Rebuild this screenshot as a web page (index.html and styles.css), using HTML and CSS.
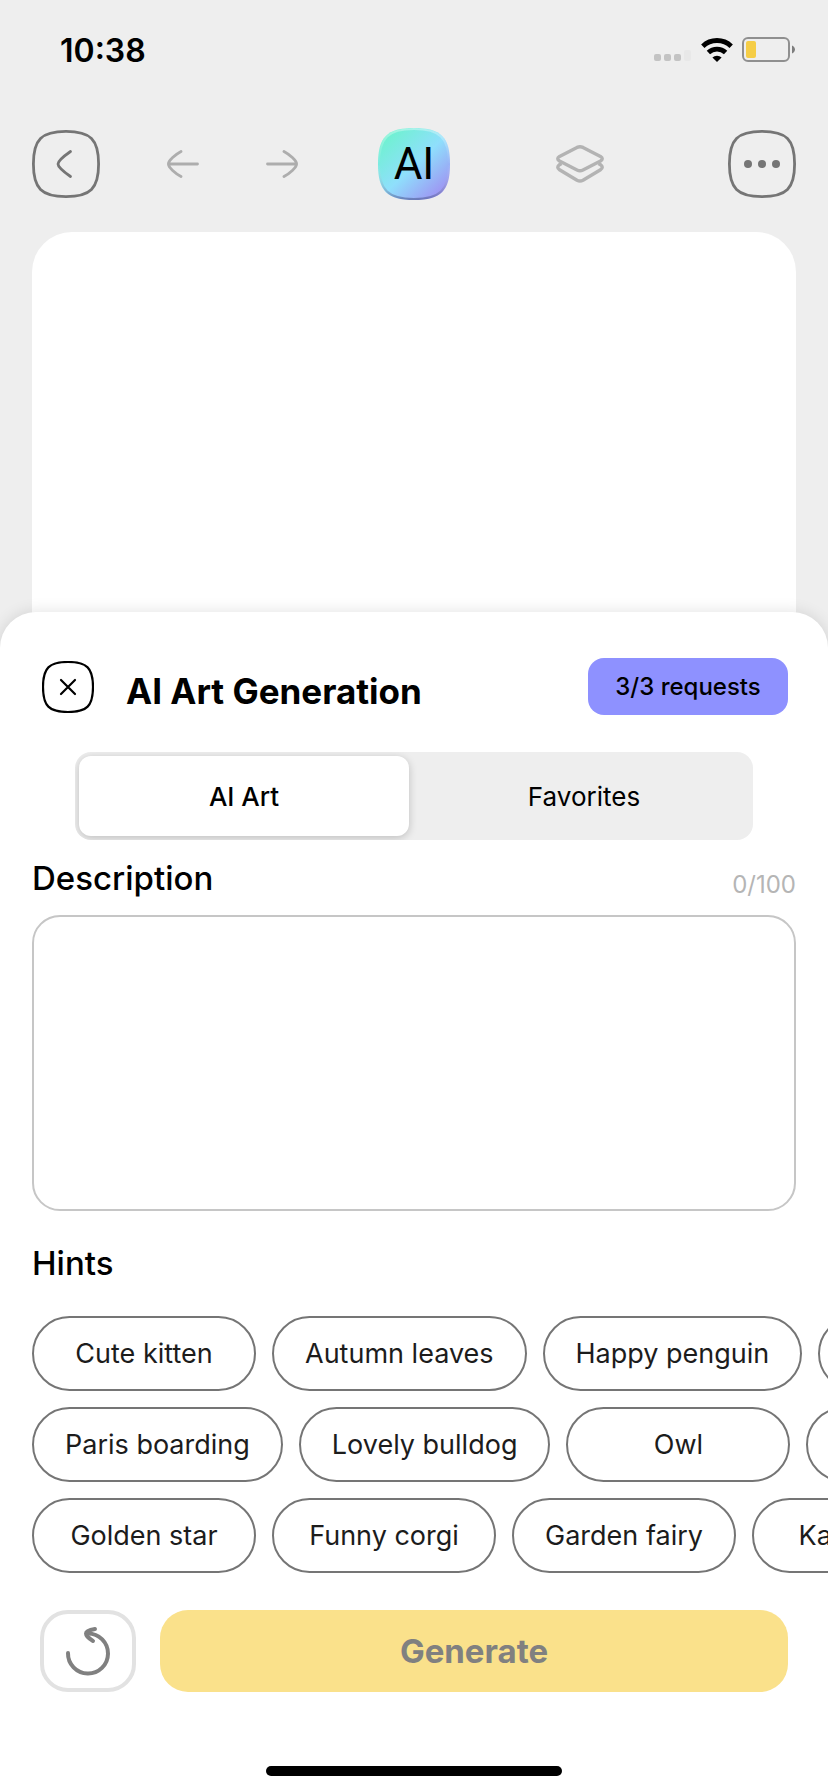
FILE: index.html
```html
<!DOCTYPE html>
<html lang="en">
<head>
    <meta charset="UTF-8">
    <meta name="viewport" content="width=device-width, initial-scale=1.0">
    <title>AI Art Generation</title>
    <link rel="stylesheet" href="styles.css">
</head>
<body>
    <div class="screen">
        <div class="status-bar">
            <span class="time">10:38</span>
            <div class="status-icons">
                <svg width="38" height="24" viewBox="0 0 38 24">
                    <g fill="#c3c3c3">
                        <rect x="0" y="16" width="7" height="7" rx="2"/>
                        <rect x="10" y="16" width="7" height="7" rx="2"/>
                        <rect x="20" y="16" width="7" height="7" rx="2"/>
                    </g>
                    <rect x="30" y="12" width="7" height="11" rx="2" fill="#e8e8e8"/>
                </svg>
                <svg width="32" height="24" viewBox="0 0 32 24">
                    <g fill="none" stroke="#000" stroke-width="4.8">
                        <path d="M1.8 8.2a20.5 20.5 0 0 1 28.4 0"/>
                        <path d="M7.4 14.6a12.5 12.5 0 0 1 17.2 0"/>
                    </g>
                    <path d="M11.4 19.600a6.600 6.600 0 0 1 9.200 0L16 24z"/>
                </svg>
                <svg width="54" height="26" viewBox="0 0 54 26">
                    <rect x="1" y="1" width="46" height="23" rx="5" fill="none" stroke="#8f8f8f" stroke-width="2"/>
                    <rect x="4" y="4" width="10" height="17" rx="2" fill="#f5cd46"/>
                    <path d="M50 8.500c4 2 4 6 0 8z" fill="#7d7d7d"/>
                </svg>
            </div>
        </div>

        <nav class="toolbar">
            <div class="tools-left">
                <button class="icon-btn" aria-label="Back">
                    <svg width="68" height="68" viewBox="0 0 68 68" fill="none" stroke="#757575" stroke-width="2.8" stroke-linecap="round">
                        <path d="M34 1.4C58.5 1.4 66.6 9.5 66.6 34S58.5 66.6 34 66.6 1.4 58.5 1.4 34 9.5 1.4 34 1.4z"/>
                        <path d="M38.500 21.500c-5 3.500-12.500 9-12.500 12.500s7.500 9 12.500 12.500"/>
                    </svg>
                </button>
                <button class="icon-btn" aria-label="Undo">
                    <svg width="32" height="28" viewBox="0 0 32 28" fill="none" stroke="#adadad" stroke-width="2.8" stroke-linecap="round">
                        <path d="M14 1.500C8.500 4.500 1.400 10.500 1.400 14S8.500 23.500 14 26.500M2 14h28.500"/>
                    </svg>
                </button>
                <button class="icon-btn" aria-label="Redo">
                    <svg width="32" height="28" viewBox="0 0 32 28" fill="none" stroke="#adadad" stroke-width="2.8" stroke-linecap="round">
                        <path d="M18 1.500C23.500 4.500 30.600 10.500 30.600 14S23.500 23.500 18 26.500M30 14H1.500"/>
                    </svg>
                </button>
            </div>
            <button class="ai-btn">
                <svg class="ai-bg" width="72" height="72" viewBox="0 0 72 72" aria-hidden="true">
                    <defs>
                        <linearGradient id="aiFill" x1="0.1" y1="0.1" x2="0.9" y2="0.95">
                            <stop offset="0" stop-color="#6ef2cf"/>
                            <stop offset="0.5" stop-color="#8fdffc"/>
                            <stop offset="1" stop-color="#9f8df2"/>
                        </linearGradient>
                        <linearGradient id="aiEdge" x1="0" y1="0" x2="0" y2="1">
                            <stop offset="0" stop-color="#fff" stop-opacity="0.35"/>
                            <stop offset="0.5" stop-color="#fff" stop-opacity="0"/>
                            <stop offset="1" stop-color="#3c4a80" stop-opacity="0.5"/>
                        </linearGradient>
                    </defs>
                    <path d="M36 0C63 0 72 9 72 36S63 72 36 72 0 63 0 36 9 0 36 0z" fill="url(#aiFill)"/>
                    <path d="M36 1C62 1 71 10 71 36S62 71 36 71 1 62 1 36 10 1 36 1z" fill="none" stroke="url(#aiEdge)" stroke-width="2"/>
                </svg>
                <span class="ai-label">AI</span>
            </button>
            <div class="tools-right">
                <button class="icon-btn" aria-label="Layers">
                    <svg width="48" height="38" viewBox="0 0 48 38" fill="none" stroke="#b3b3b3" stroke-width="3.4" stroke-linejoin="round">
                        <path d="M21 2.400q3-1.200 6 0l17.500 9q3.500 2.300 0 4.600L27 25q-3 1.500-6 0L3.500 16q-3.500-2.300 0-4.600z"/>
                        <path d="M5.500 18.500l-2 1.200q-3.500 2.800 0 5L21 35.200q3 1.500 6 0l17.500-10.500q3.500-2.200 0-5l-2-1.200"/>
                    </svg>
                </button>
                <button class="icon-btn" aria-label="More">
                    <svg width="68" height="68" viewBox="0 0 68 68">
                        <path d="M34 1.400C58.500 1.400 66.600 9.500 66.600 34S58.500 66.600 34 66.600 1.400 58.500 1.400 34 9.500 1.400 34 1.400z" fill="none" stroke="#757575" stroke-width="2.8"/>
                        <g fill="#757575">
                            <circle cx="20" cy="34" r="4"/>
                            <circle cx="34" cy="34" r="4"/>
                            <circle cx="48" cy="34" r="4"/>
                        </g>
                    </svg>
                </button>
            </div>
        </nav>

        <div class="canvas"></div>

        <main class="sheet">
            <header class="sheet-header">
                <button class="icon-btn" aria-label="Close">
                    <svg width="52" height="52" viewBox="0 0 52 52" fill="none" stroke="#000" stroke-width="2.2" stroke-linecap="round">
                        <path d="M26 1C45 1 51 7 51 26S45 51 26 51 1 45 1 26 7 1 26 1z"/>
                        <path d="M19 19l14 14M33 19L19 33"/>
                    </svg>
                </button>
                <h1>AI Art Generation</h1>
                <span class="badge">3/3 requests</span>
            </header>

            <div class="tabs">
                <button class="tab active">AI Art</button>
                <button class="tab">Favorites</button>
            </div>

            <div class="field-head">
                <label class="label" for="description">Description</label>
                <span class="counter">0/100</span>
            </div>
            <textarea id="description" class="description" maxlength="100"></textarea>

            <h2 class="label hints-title">Hints</h2>
            <div class="hints">
                <div class="hint-row">
                    <button class="chip">Cute kitten</button>
                    <button class="chip">Autumn leaves</button>
                    <button class="chip">Happy penguin</button>
                    <button class="chip" aria-label="More hints"></button>
                </div>
                <div class="hint-row">
                    <button class="chip">Paris boarding</button>
                    <button class="chip">Lovely bulldog</button>
                    <button class="chip">Owl</button>
                    <button class="chip" aria-label="More hints"></button>
                </div>
                <div class="hint-row">
                    <button class="chip">Golden star</button>
                    <button class="chip">Funny corgi</button>
                    <button class="chip">Garden fairy</button>
                    <button class="chip">Kawaii cat</button>
                </div>
            </div>

            <div class="actions">
                <button class="reset" aria-label="Reset">
                    <svg width="46" height="52" viewBox="0 0 46 52" fill="none" stroke="#808080" stroke-width="4" stroke-linecap="round" stroke-linejoin="round">
                        <path d="M3 28a20 20 0 1 0 20-19.500"/>
                        <path d="M30 4c-5 .8-9 2.500-9 4.500s3.500 5.500 7 7.500"/>
                    </svg>
                </button>
                <button class="generate">Generate</button>
            </div>
            <div class="home-indicator"></div>
        </main>
    </div>
</body>
</html>
```
FILE: styles.css
```css
* { box-sizing: border-box; }
body { margin: 0; background: #eee; color: #000; font-family: Inter, "Liberation Sans", sans-serif; }
button { font-family: inherit; color: inherit; background: none; border: none; padding: 0; cursor: pointer; }
svg { display: block; }

.screen { min-height: 100vh; display: flex; flex-direction: column; overflow: hidden; }

.status-bar { display: flex; justify-content: space-between; align-items: center; height: 100px; padding: 0 32px 0 60px; }
.time { font-size: 32px; font-weight: 600; }
.status-icons { display: flex; align-items: center; gap: 9px; }

.toolbar { display: grid; grid-template-columns: 1fr auto 1fr; align-items: center; height: 72px; margin-top: 28px; padding: 0 32px; }
.tools-left { display: flex; align-items: center; gap: 67px; }
.tools-right { display: flex; align-items: center; justify-content: flex-end; gap: 124px; }
.ai-btn { display: grid; place-items: center; }
.ai-bg, .ai-label { grid-area: 1 / 1; }
.ai-label { font-family: Roboto, sans-serif; font-size: 44px; line-height: 48px; font-weight: 400; }

.canvas { flex: 1; min-height: 200px; margin: 32px 32px -40px; background: #fff; border-radius: 40px 40px 0 0; }

.sheet { position: relative; background: #fff; border-radius: 36px 36px 0 0; box-shadow: 0 0 16px rgba(0, 0, 0, 0.12); padding: 46px 32px 16px; }
.sheet-header { display: flex; align-items: center; padding: 0 8px 0 10px; }
h1 { flex: 1; margin: 0 0 0 32px; padding-top: 8px; font-size: 35px; line-height: 40px; font-weight: 700; }
.badge { width: 200px; background: #8e91ff; border-radius: 16px; font-size: 24px; line-height: 57px; font-weight: 500; text-align: center; }

.tabs { display: flex; gap: 10px; margin: 37px 43px 0; padding: 4px; height: 88px; background: #eee; border-radius: 16px; overflow: hidden; }
.tab { flex: 1; border-radius: 12px; font-size: 26px; font-weight: 400; }
.tab.active { background: #fff; box-shadow: 0 2px 8px rgba(0, 0, 0, 0.2); font-weight: 500; }

.field-head { display: flex; justify-content: space-between; align-items: flex-end; margin: 18px 0 17px; }
.label { font-size: 33px; line-height: 40px; font-weight: 500; }
.counter { font-size: 24px; line-height: 26px; color: #b5b5b5; }
.description { display: block; width: 100%; height: 296px; padding: 20px; border: 2px solid #c6c6c6; border-radius: 28px; outline: none; resize: none; font: inherit; font-size: 28px; }

.hints-title { margin: 32px 0 33px; }
.hints { display: flex; flex-direction: column; gap: 16px; margin-right: -32px; overflow: hidden; }
.hint-row { display: flex; gap: 16px; }
.chip { flex: none; min-width: 224px; height: 75px; padding: 0 31px; border: 2px solid #757575; border-radius: 38px; font-size: 27px; color: #1c1c1c; }

.actions { display: flex; gap: 24px; margin-top: 37px; padding: 0 8px; }
.reset { width: 96px; height: 82px; display: grid; place-items: center; border: 4px solid #e2e2e2; border-radius: 28px; }
.generate { flex: 1; background: #fae18b; border-radius: 28px; font-size: 33px; font-weight: 700; color: #808080; }

.home-indicator { width: 296px; height: 10px; margin: 74px auto 0; background: #000; border-radius: 5px; }
```
